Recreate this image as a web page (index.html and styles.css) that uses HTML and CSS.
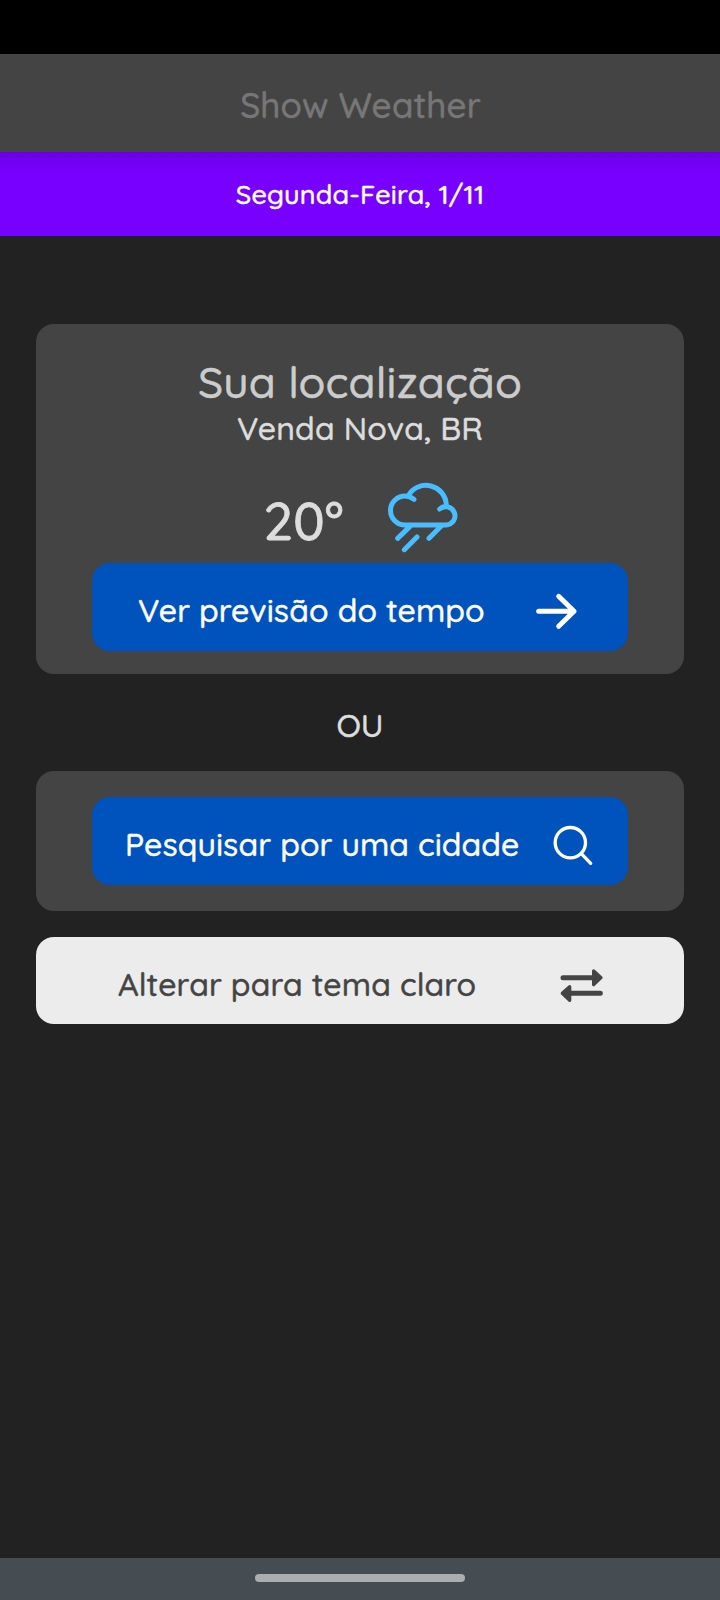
FILE: index.html
```html
<!DOCTYPE html>
<html lang="pt-BR">
<head>
<meta charset="utf-8">
<title>Show Weather</title>
<link rel="stylesheet" href="styles.css">
</head>
<body>
<div class="app">
  <div class="status-bar"></div>
  <header class="header"><h1 class="title">Show Weather</h1></header>
  <div class="date-bar"><span class="date">Segunda-Feira, 1/11</span></div>
  <main class="content">
    <section class="card location">
      <h2 class="heading">Sua localização</h2>
      <p class="city">Venda Nova, BR</p>
      <div class="weather">
        <span class="temp">20°</span>
        <svg class="cloud" viewBox="405 30 225 225">
          <path d="M492 91A44 44 0 0 0 465 81A43.500 43.500 0 0 0 465 168H588A27.500 27.500 0 1 0 569 120M475 80A61 61 0 0 1 589 108M480 172L443 208M501 204L463 242M573 172L537 208"/>
        </svg>
      </div>
      <button class="button forecast">
        <span class="label">Ver previsão do tempo</span>
        <svg class="arrow" viewBox="520 125 135 117"><path d="M534 183H640M594 138L640 183L594 228"/></svg>
      </button>
    </section>
    <p class="or">OU</p>
    <section class="card search-card">
      <button class="button search">
        <span class="label">Pesquisar por uma cidade</span>
        <svg class="lens" viewBox="576 402 126 126"><circle cx="631" cy="458" r="45.500"/><path d="M664 491L692 520"/></svg>
      </button>
    </section>
    <button class="button theme">
      <span class="label">Alterar para tema claro</span>
      <svg class="swap" viewBox="595 140 135 111">
        <path class="line" d="M607 172H700M719 219H625"/>
        <path class="head" d="M699 152L721 172L699 193ZM627 199L605 219L627 240Z"/>
      </svg>
    </button>
  </main>
  <footer class="nav-bar"><div class="handle"></div></footer>
</div>
</body>
</html>
```
FILE: styles.css
```css
* { box-sizing: border-box; }
body { margin: 0; font-family: Quicksand, Lato, sans-serif; font-weight: 500; -webkit-text-stroke: .45px; }
h1, h2, p { margin: 0; font-weight: inherit; }
.app { display: flex; flex-direction: column; width: 720px; height: 1600px; background: #222; overflow: hidden; }
.status-bar { height: 54px; background: #000; }
.header { height: 98px; padding: 29px 0 0 1px; background: #444; text-align: center; }
.title { color: #777; font-size: 35px; line-height: 44px; letter-spacing: .12px; white-space: nowrap; }
.date-bar { height: 84px; padding-top: 25px; background: linear-gradient(#6800de, #6e00eb 5px, #7300f5 12px, #7800ff 22px); text-align: center; }
.date { display: block; color: #fff; font-size: 27px; line-height: 34px; letter-spacing: .22px; }
.content { flex: 1; padding: 88px 36px 0; text-align: center; }
.card { display: flex; flex-direction: column; align-items: center; background: #444; border-radius: 18px; }
.location { height: 350px; padding-top: 31px; }
.heading { color: #ccc; font-size: 44px; line-height: 54px; letter-spacing: .14px; }
.city { margin-top: -1px; color: #ddd; font-size: 32px; line-height: 40px; letter-spacing: .17px; }
.weather { display: flex; align-items: center; justify-content: center; gap: 41px; height: 75px; margin-top: 31px; padding-left: 3px; }
.temp { color: #ddd; font-size: 53px; line-height: 62px; padding-top: 7px; -webkit-text-stroke-width: .8px; }
.cloud { width: 75px; height: 75px; fill: none; stroke: #48bdff; stroke-width: 15; stroke-linecap: round; }
.button { display: flex; align-items: center; border: 0; border-radius: 18px; font: inherit; font-size: 32px; line-height: 40px; letter-spacing: .1px; white-space: nowrap; }
.forecast, .search { width: 536px; height: 88px; background: #0052bc; color: #fff; }
.forecast { margin-top: 9px; padding: 7px 49px 0 46px; justify-content: space-between; }
.forecast .label, .search .label { margin-top: -2px; }
.arrow { width: 45px; height: 39px; margin-top: 1px; fill: none; stroke: #fff; stroke-width: 15; stroke-linecap: round; stroke-linejoin: round; }
.or { height: 97px; padding-top: 31px; color: #ddd; font-size: 32px; line-height: 40px; letter-spacing: -.2px; }
.search-card { height: 140px; justify-content: center; }
.search { padding: 7px 34px 0 33px; justify-content: space-between; }
.lens { width: 42px; height: 42px; fill: none; stroke: #fff; stroke-width: 10; stroke-linecap: round; }
.theme { width: 648px; height: 87px; margin-top: 26px; padding: 7px 80px 0 82px; background: #ececec; color: #444; justify-content: space-between; }
.theme .label { letter-spacing: .13px; }
.swap { width: 45px; height: 37px; margin-top: 2px; fill: none; stroke: #444; stroke-linecap: round; stroke-linejoin: round; }
.swap .line { stroke-width: 15; }
.swap .head { fill: #444; stroke-width: 10; }
.nav-bar { height: 42px; padding-top: 16px; background: #454c52; }
.handle { width: 210px; height: 8px; margin: 0 auto; border-radius: 4px; background: #abaeb1; }
```
